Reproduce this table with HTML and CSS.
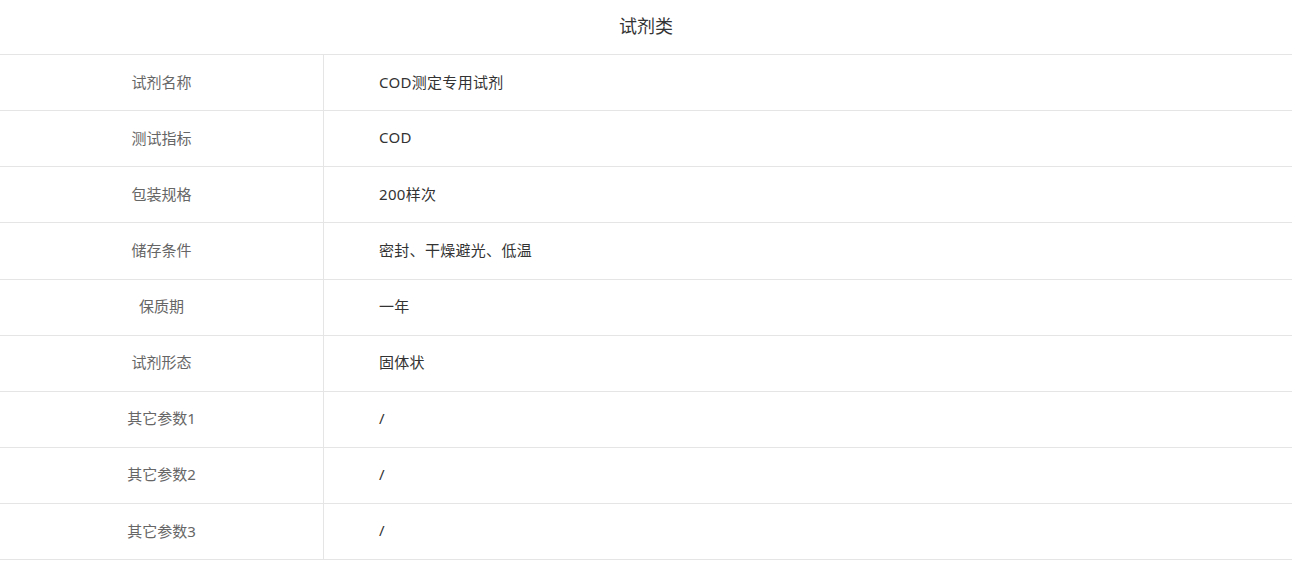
FILE: index.html
```html
<!DOCTYPE html>
<html lang="zh-CN">
<head>
    <meta charset="UTF-8">
    <meta name="viewport" content="width=device-width, initial-scale=1">
    <title>试剂类</title>
    <link rel="stylesheet" href="styles.css">
</head>
<body>
    <div class="spec">
        <h2 class="spec-title">试剂类</h2>
        <div class="spec-row"><div class="spec-label">试剂名称</div><div class="spec-value">COD测定专用试剂</div></div>
        <div class="spec-row"><div class="spec-label">测试指标</div><div class="spec-value">COD</div></div>
        <div class="spec-row"><div class="spec-label">包装规格</div><div class="spec-value">200样次</div></div>
        <div class="spec-row"><div class="spec-label">储存条件</div><div class="spec-value">密封、干燥避光、低温</div></div>
        <div class="spec-row"><div class="spec-label">保质期</div><div class="spec-value">一年</div></div>
        <div class="spec-row"><div class="spec-label">试剂形态</div><div class="spec-value">固体状</div></div>
        <div class="spec-row"><div class="spec-label">其它参数1</div><div class="spec-value">/</div></div>
        <div class="spec-row"><div class="spec-label">其它参数2</div><div class="spec-value">/</div></div>
        <div class="spec-row"><div class="spec-label">其它参数3</div><div class="spec-value">/</div></div>
    </div>
</body>
</html>
```

FILE: styles.css
```css
*{
    font-family: "Noto Sans", "Noto Sans CJK SC", sans-serif;
    margin: 0;
    padding: 0;
    box-sizing: border-box;
}
body {
    background-color: #fff;
}
.spec {
    width: 100%;
}
.spec-title {
    height: 55px;
    line-height: 52px;
    text-align: center;
    font-size: 18px;
    font-weight: normal;
    color: #333;
    border-bottom: 1px solid #e5e5e5;
}
.spec-row {
    display: flex;
    height: 56.125px;
    border-bottom: 1px solid #e5e5e5;
}
.spec-label {
    width: 324px;
    display: flex;
    align-items: center;
    justify-content: center;
    padding-bottom: 3px;
    font-size: 15px;
    color: #666;
    border-right: 1px solid #e5e5e5;
}
.spec-value {
    flex: 1;
    display: flex;
    align-items: center;
    padding-left: 55px;
    padding-bottom: 3px;
    font-size: 15px;
    letter-spacing: 0.3px;
    color: #333;
}
```
